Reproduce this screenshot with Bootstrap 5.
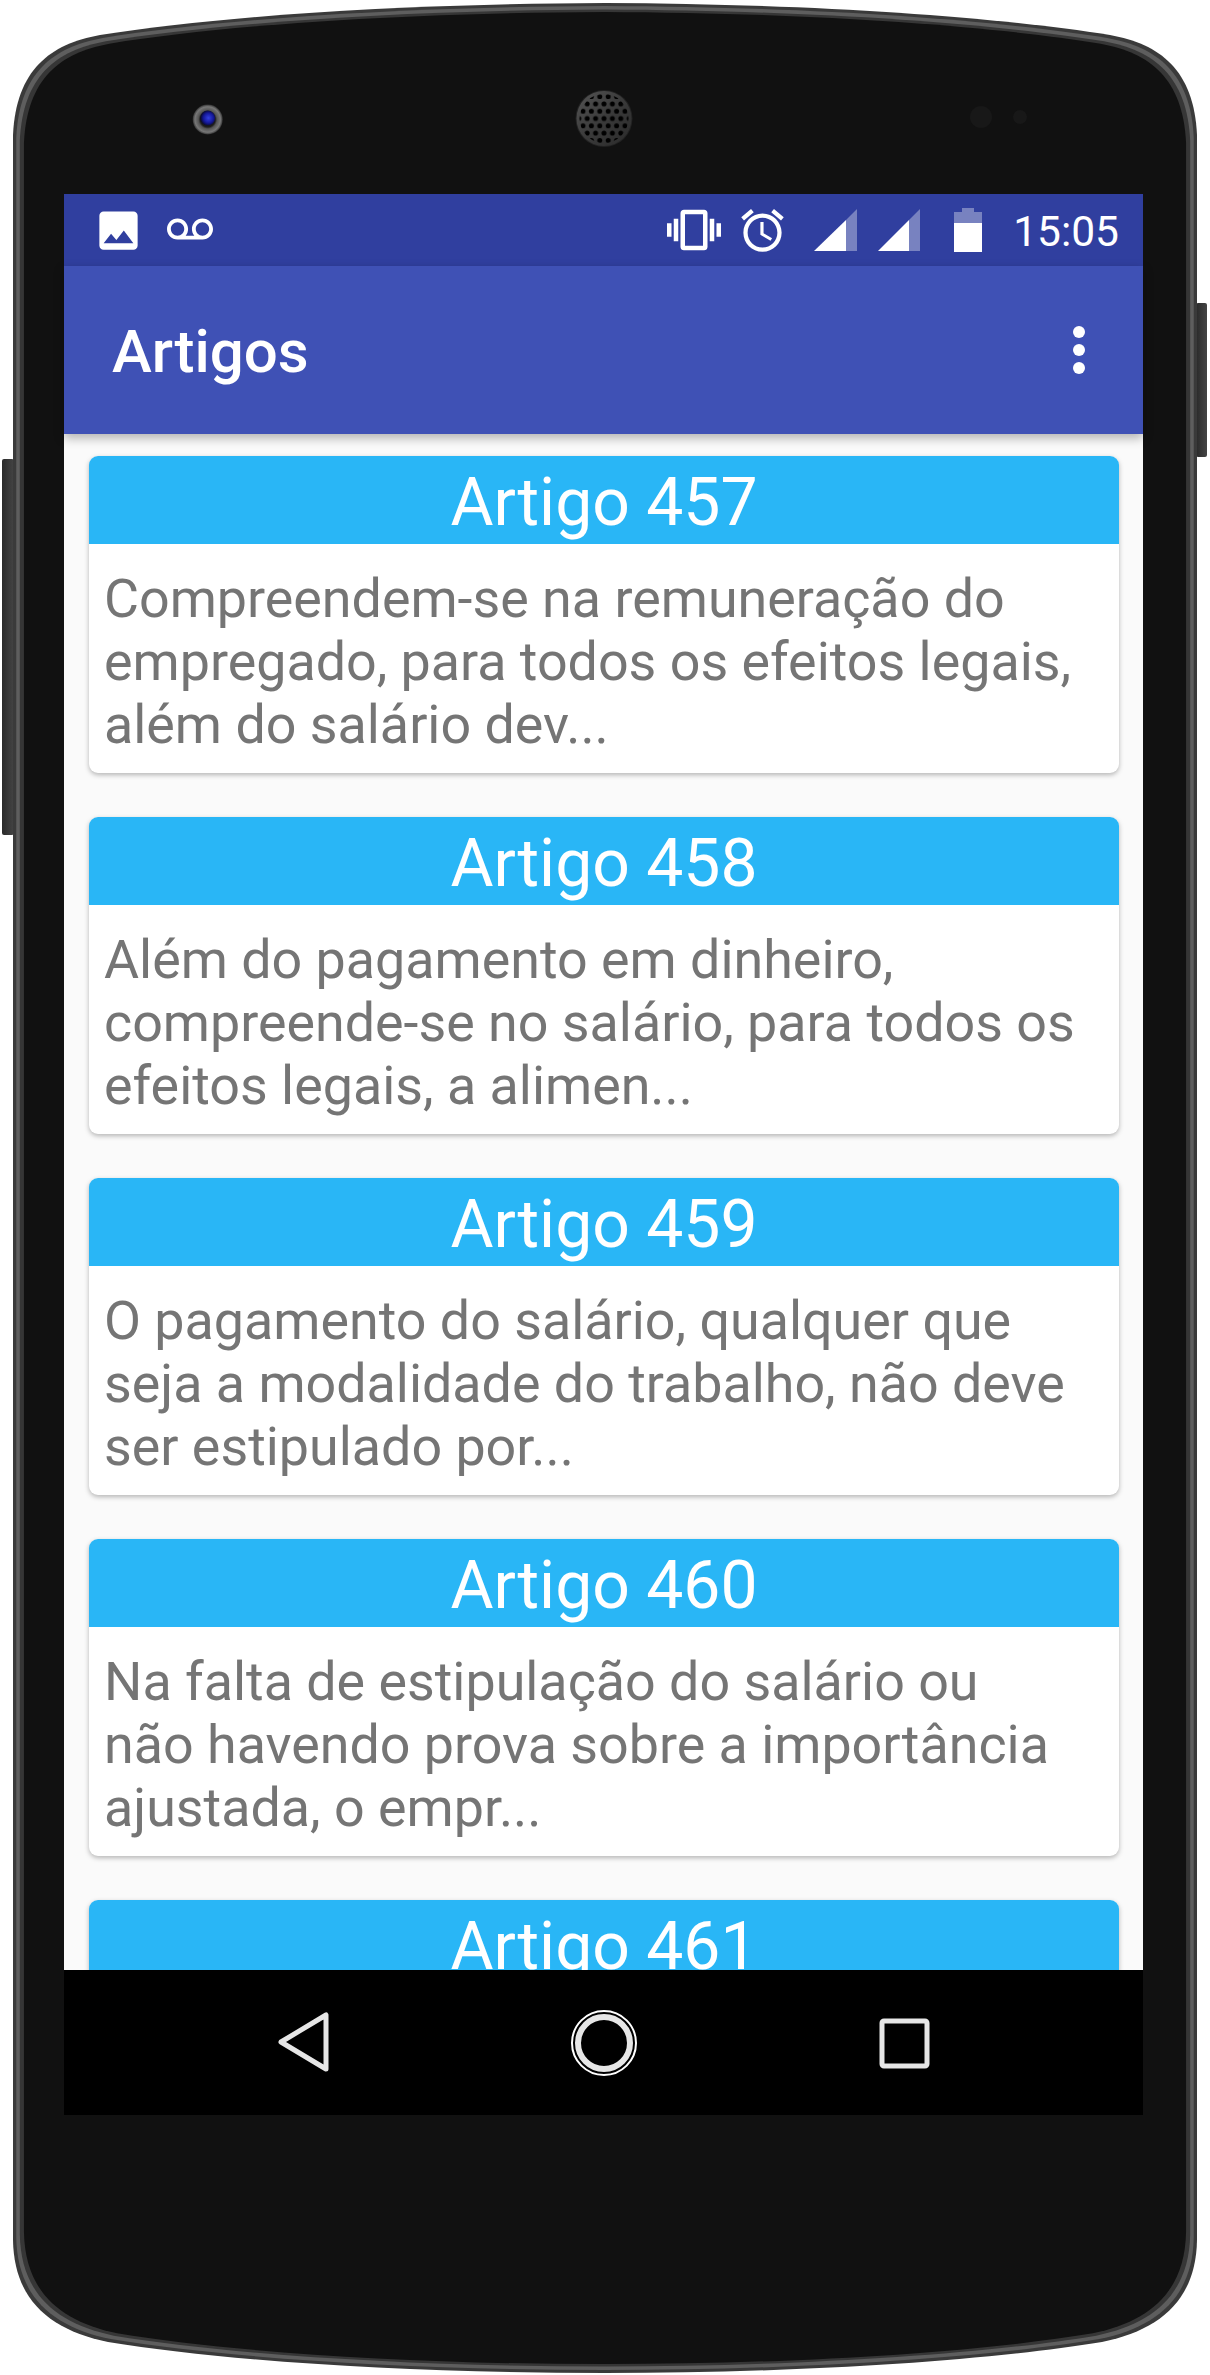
<!DOCTYPE html>
<html lang="en">
<head>
  <meta charset="UTF-8" />
  <meta name="viewport" content="width=device-width, initial-scale=1.0" />
  <title>Artigos</title>
  <link href="https://cdn.jsdelivr.net/npm/bootstrap@5.3.0/dist/css/bootstrap.min.css" rel="stylesheet" />
  <style>
    body { margin: 0; background: #fff; font-family: Roboto, "Liberation Sans", sans-serif; overflow: hidden; }
    .phone { position: relative; width: 1210px; height: 2375px; padding: 194px 0 0 64px; }
    .frame { position: absolute; top: 0; left: 0; }
    .screen { position: relative; width: 1079px; height: 1921px; }
    .status-bar { height: 72px; background: #303f9f; padding: 0 24px 0 29px; }
    .status-bar svg { display: block; fill: #fff; }
    .status-time { color: #fff; font-size: 42.5px; line-height: 1; margin-left: 31px; padding-top: 4px; }
    .ml-voice { margin-left: 23px; }
    .ml-alarm { margin-left: 16px; }
    .ml-sig1 { margin-left: 26px; }
    .ml-sig2 { margin-left: 21px; }
    .ml-batt { margin-left: 34px; }
    .app-bar { height: 168px; background: #3f51b5; padding: 0 58px 0 48px; box-shadow: 0 4px 10px rgba(0,0,0,.3); z-index: 2; border-radius: 0; }
    .app-title { color: #fff; font-size: 60px; font-weight: 500; line-height: 1; margin-top: 4px !important; padding: 0; }
    .dots i { display: block; width: 12px; height: 12px; border-radius: 50%; background: #fff; margin: 6px 0; }
    .article-list { background: #fafafa; height: 1536px; padding: 22px 24px 0 25px; overflow: hidden; }
    .article { border: 0; border-radius: 9px; margin-bottom: 44px; box-shadow: 0 2px 5px rgba(0,0,0,.28); height: 317px; flex-shrink: 0; overflow: hidden; }
    .article .card-header { height: 88px; padding: 5px 0 0; border: 0; border-radius: 0; background: #29b6f6; color: #fff; font-size: 66px; line-height: 83px; text-align: center; }
    .article .card-body { padding: 23px 42px 0 15px; color: #757575; font-size: 53.8px; line-height: 63px; }
    .nav-keys { height: 145px; background: #000; gap: 200px; }
    .nav-keys svg { display: block; }
  </style>
</head>
<body>
  <div class="phone">
    <svg class="frame" width="1210" height="2375" viewBox="0 0 1210 2375">
      <defs>
        <path id="shell" d="M605,3 C400,4 220,16 100,35 C50,44 16,70 13,135 L13,2240 C14,2300 50,2330 108,2342 C230,2362 420,2373 605,2373 C790,2373 980,2362 1102,2342 C1160,2330 1196,2300 1197,2240 L1197,135 C1194,70 1160,44 1110,35 C990,16 810,4 605,3 Z" />
        <linearGradient id="sideKey" x1="0" x2="1" y1="0" y2="0">
          <stop offset="0" stop-color="#2a2a2a" />
          <stop offset="1" stop-color="#444" />
        </linearGradient>
        <radialGradient id="lens" cx="50%" cy="50%" r="50%">
          <stop offset="0" stop-color="#111" />
          <stop offset=".5" stop-color="#1c1c1c" />
          <stop offset=".62" stop-color="#555" />
          <stop offset=".85" stop-color="#777" />
          <stop offset="1" stop-color="#333" />
        </radialGradient>
        <radialGradient id="iris" cx="55%" cy="50%" r="55%">
          <stop offset="0" stop-color="#3440e0" />
          <stop offset=".6" stop-color="#14189a" />
          <stop offset="1" stop-color="#080820" />
        </radialGradient>
        <linearGradient id="grille" x1="0" x2="1" y1="0" y2="1">
          <stop offset="0" stop-color="#555" />
          <stop offset=".5" stop-color="#3a3a3a" />
          <stop offset="1" stop-color="#2a2a2a" />
        </linearGradient>
        <pattern id="holes" width="8.400" height="14.600" patternUnits="userSpaceOnUse" patternTransform="translate(604 118.500)">
          <circle cx="0" cy="0" r="2.500" fill="#000" />
          <circle cx="8.400" cy="0" r="2.500" fill="#000" />
          <circle cx="4.200" cy="7.300" r="2.500" fill="#000" />
          <circle cx="0" cy="14.600" r="2.500" fill="#000" />
          <circle cx="8.400" cy="14.600" r="2.500" fill="#000" />
        </pattern>
      </defs>
      <rect x="2" y="459" width="12" height="376" rx="2" fill="url(#sideKey)" />
      <rect x="1196" y="303" width="11" height="154" rx="2" fill="url(#sideKey)" />
      <use href="#shell" fill="#3a3a3a" />
      <use href="#shell" fill="#5e5e5e" transform="translate(605 1188) scale(.9945 .9975) translate(-605 -1188)" />
      <use href="#shell" fill="#363636" transform="translate(605 1188) scale(.9885 .9945) translate(-605 -1188)" />
      <use href="#shell" fill="#111" transform="translate(605 1188) scale(.9815 .9925) translate(-605 -1188)" />
      <circle cx="207.700" cy="119.500" r="15" fill="url(#lens)" />
      <circle cx="207.700" cy="118" r="7.500" fill="url(#iris)" />
      <circle cx="604" cy="118.500" r="28.500" fill="#222" />
      <circle cx="604" cy="118.500" r="27.500" fill="url(#grille)" />
      <circle cx="604" cy="118.500" r="24.500" fill="url(#holes)" />
      <circle cx="981" cy="117" r="11" fill="#181818" />
      <circle cx="1020" cy="117" r="7" fill="#181818" />
    </svg>

    <div class="screen d-flex flex-column">
      <div class="status-bar d-flex align-items-center">
        <svg width="51" height="51" viewBox="0 0 24 24"><path d="M21 19V5c0-1.100-.9-2-2-2H5c-1.100 0-2 .9-2 2v14c0 1.100.9 2 2 2h14c1.100 0 2-.9 2-2zM8.500 13.500l2.500 3.010L14.500 12l4.500 6H5l3.500-4.500z" /></svg>
        <svg class="ml-voice" width="46" height="46" viewBox="0 0 24 24"><path d="M18.500 6C15.460 6 13 8.460 13 11.500c0 1.330.47 2.550 1.260 3.500H9.740c.79-.95 1.260-2.170 1.260-3.500C11 8.460 8.540 6 5.500 6S0 8.460 0 11.500 2.460 17 5.500 17h13c3.040 0 5.500-2.460 5.500-5.500S21.540 6 18.500 6zM5.500 15C3.570 15 2 13.430 2 11.500S3.570 8 5.500 8 9 9.570 9 11.500 7.430 15 5.500 15zm13 0c-1.930 0-3.500-1.570-3.500-3.500S16.570 8 18.500 8 22 9.570 22 11.500 20.430 15 18.500 15z" /></svg>
        <div class="ms-auto d-flex align-items-center">
          <svg width="54" height="54" viewBox="0 0 24 24"><path d="M0 15h2V9H0v6zm3 2h2V7H3v10zm19-8v6h2V9h-2zm-3 8h2V7h-2v10zM16.500 3h-9C6.670 3 6 3.670 6 4.500v15c0 .83.67 1.500 1.500 1.500h9c.83 0 1.500-.67 1.500-1.500v-15c0-.83-.67-1.500-1.500-1.500zM16 19H8V5h8v14z" /></svg>
          <svg class="ml-alarm" width="51" height="51" viewBox="0 0 24 24"><path d="M22 5.720l-4.600-3.860-1.290 1.530 4.600 3.860L22 5.720zM7.880 3.390L6.600 1.860 2 5.710l1.290 1.530 4.590-3.850zM12.500 8H11v6l4.750 2.850.75-1.230-4-2.370V8zM12 4c-4.970 0-9 4.030-9 9s4.020 9 9 9c4.970 0 9-4.030 9-9s-4.030-9-9-9zm0 16c-3.870 0-7-3.130-7-7s3.130-7 7-7 7 3.130 7 7-3.130 7-7 7z" /></svg>
          <svg class="ml-sig1" width="43" height="42" viewBox="0 0 43 42"><path d="M43 0V42H32V11z" fill-opacity=".35" /><path d="M32 11V42H0z" /></svg>
          <svg class="ml-sig2" width="42" height="42" viewBox="0 0 42 42"><path d="M42 0V42H31V11z" fill-opacity=".35" /><path d="M31 11V42H0z" /></svg>
          <svg class="ml-batt" width="28" height="44" viewBox="0 0 28 44"><path d="M0 15V4h8V0h12v4h8v11z" fill-opacity=".35" /><path d="M0 15h28v29H0z" /></svg>
          <span class="status-time">15:05</span>
        </div>
      </div>

      <nav class="navbar app-bar d-flex flex-nowrap justify-content-between align-items-center">
        <span class="navbar-brand app-title m-0">Artigos</span>
        <div class="dots"><i></i><i></i><i></i></div>
      </nav>

      <div class="article-list d-flex flex-column">
        <div class="card article">
          <div class="card-header">Artigo 457</div>
          <div class="card-body">Compreendem-se na remuneração do empregado, para todos os efeitos legais, além do salário dev...</div>
        </div>
        <div class="card article">
          <div class="card-header">Artigo 458</div>
          <div class="card-body">Além do pagamento em dinheiro, compreende-se no salário, para todos os efeitos legais, a alimen...</div>
        </div>
        <div class="card article">
          <div class="card-header">Artigo 459</div>
          <div class="card-body">O pagamento do salário, qualquer que seja a modalidade do trabalho, não deve ser estipulado por...</div>
        </div>
        <div class="card article">
          <div class="card-header">Artigo 460</div>
          <div class="card-body">Na falta de estipulação do salário ou não havendo prova sobre a importância ajustada, o empr...</div>
        </div>
        <div class="card article">
          <div class="card-header">Artigo 461</div>
        </div>
      </div>

      <div class="nav-keys d-flex justify-content-center align-items-center">
        <svg width="100" height="100" viewBox="0 0 100 100"><path d="M72 23V77L27 50Z" transform="translate(0 -1)" fill="none" stroke="#e6e6e6" stroke-width="5" stroke-linejoin="round" /></svg>
        <svg width="100" height="100" viewBox="0 0 100 100"><circle cx="50" cy="50" r="32" fill="none" stroke="#fff" stroke-width="2" /><circle cx="50" cy="50" r="26" fill="none" stroke="#e6e6e6" stroke-width="6" /></svg>
        <svg width="100" height="100" viewBox="0 0 100 100"><rect x="28" y="28" width="45" height="45" rx="2" fill="none" stroke="#e6e6e6" stroke-width="5" /></svg>
      </div>
    </div>
  </div>
  <script src="https://cdn.jsdelivr.net/npm/bootstrap@5.3.0/dist/js/bootstrap.bundle.min.js"></script>
</body>
</html>
